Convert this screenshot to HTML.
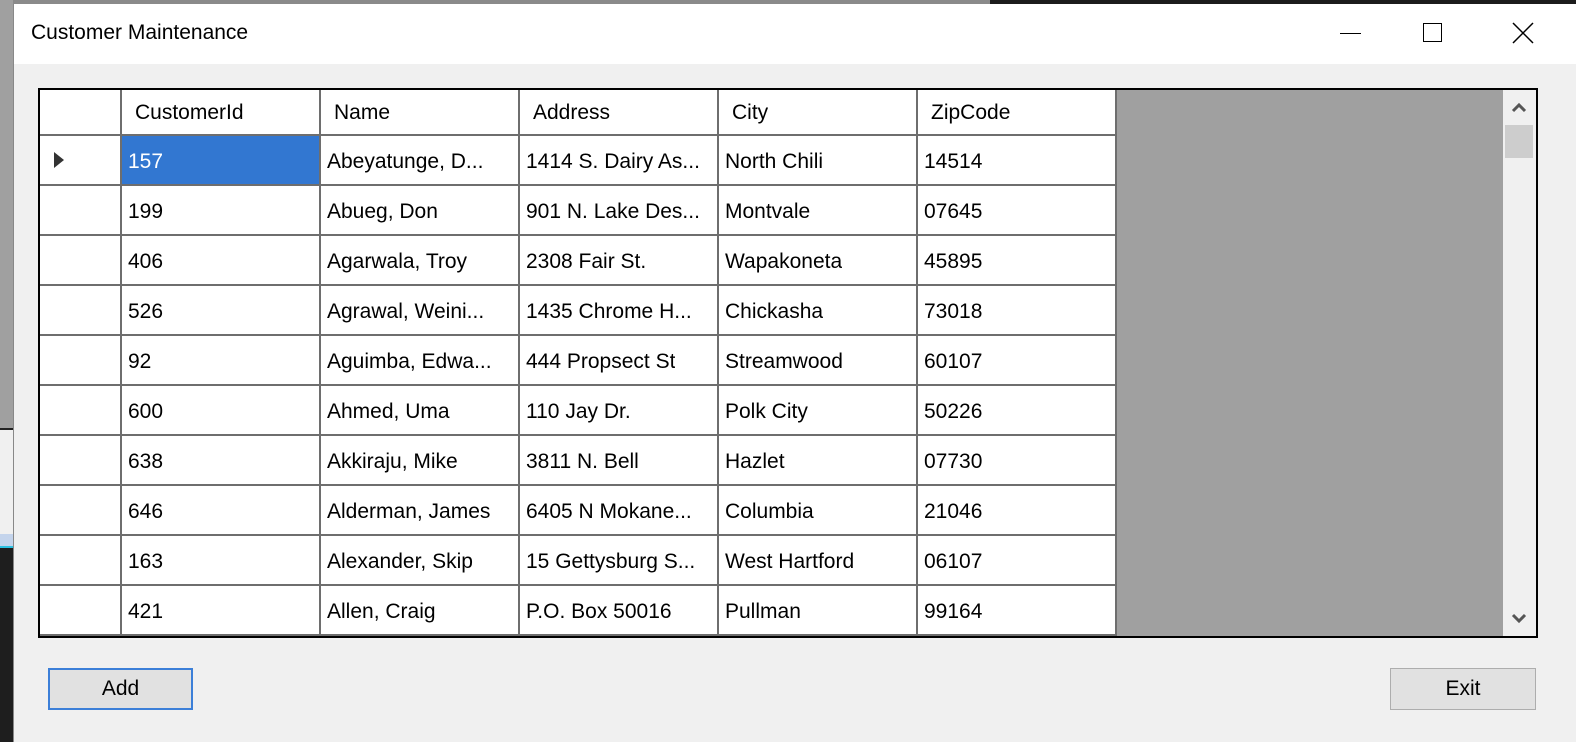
<!DOCTYPE html>
<html><head><style>
*{margin:0;padding:0;box-sizing:border-box}
body{width:1576px;height:742px;position:relative;overflow:hidden;background:#f0f0f0;font-family:"Segoe UI","Liberation Sans",sans-serif;color:#000}
.a{position:absolute}
.cell{position:absolute;font-size:21px;line-height:49px;padding-left:7px;white-space:nowrap;overflow:hidden}
</style></head><body>
<div class="a" style="left:0;top:0;width:1576px;height:4px;background:#8a8a8a"></div>
<div class="a" style="left:990px;top:0;width:586px;height:4px;background:#1c1c1c"></div>
<div class="a" style="left:0;top:0;width:13px;height:428px;background:#a0a0a0"></div>
<div class="a" style="left:0;top:428px;width:13px;height:2px;background:#222"></div>
<div class="a" style="left:0;top:430px;width:13px;height:104px;background:#f0f0f0"></div>
<div class="a" style="left:0;top:534px;width:13px;height:12px;background:#c4d4ec"></div>
<div class="a" style="left:0;top:546px;width:13px;height:2px;background:#2cc0e0"></div>
<div class="a" style="left:0;top:548px;width:13px;height:194px;background:#1e1e1e"></div>
<div class="a" style="left:13px;top:4px;width:1px;height:738px;background:#888"></div>
<div class="a" style="left:14px;top:4px;width:1562px;height:60px;background:#fff"></div>
<div class="a" style="left:31px;top:18px;font-size:21px;line-height:30px">Customer Maintenance</div>
<div class="a" style="left:1340px;top:33px;width:21px;height:1px;background:#000"></div>
<div class="a" style="left:1423px;top:23px;width:19px;height:19px;border:1.5px solid #000"></div>
<svg class="a" style="left:1512px;top:22px" width="22" height="22"><path d="M1 1L21 21M21 1L1 21" stroke="#000" stroke-width="1.5"/></svg>
<div class="a" style="left:38px;top:88px;width:1500px;height:550px;border:2px solid #000;background:#a0a0a0;overflow:hidden">
<div class="a" style="left:0;top:0;width:1076px;height:546px;background:#fff"></div>
<div class="a" style="left:1463px;top:0;width:33px;height:546px;background:#f0f0f0"></div>
<div class="a" style="left:1465px;top:35px;width:28px;height:33px;background:#cdcdcd"></div>
<svg class="a" style="left:1471px;top:12px" width="16" height="12"><path d="M2 9L8 3L14 9" stroke="#555" stroke-width="3" fill="none"/></svg>
<svg class="a" style="left:1471px;top:522px" width="16" height="12"><path d="M2 3L8 9L14 3" stroke="#555" stroke-width="3" fill="none"/></svg>
<div id="g"></div>
</div>
<div class="a" style="left:48px;top:668px;width:145px;height:42px;border:2px solid #3c7fd8;background:#e1e1e1;font-size:21px;text-align:center;line-height:37px">Add</div>
<div class="a" style="left:1390px;top:668px;width:146px;height:42px;border:1px solid #adadad;background:#e1e1e1;font-size:21px;text-align:center;line-height:39px">Exit</div>
<script>
var g=document.getElementById('g'),h='';
var xs=[0,80,279,478,677,876,1075];
var hd=['','CustomerId','Name','Address','City','ZipCode'];
var d=[['157','Abeyatunge, D...','1414 S. Dairy As...','North Chili','14514'],['199','Abueg, Don','901 N. Lake Des...','Montvale','07645'],['406','Agarwala, Troy','2308 Fair St.','Wapakoneta','45895'],['526','Agrawal, Weini...','1435 Chrome H...','Chickasha','73018'],['92','Aguimba, Edwa...','444 Propsect St','Streamwood','60107'],['600','Ahmed, Uma','110 Jay Dr.','Polk City','50226'],['638','Akkiraju, Mike','3811 N. Bell','Hazlet','07730'],['646','Alderman, James','6405 N Mokane...','Columbia','21046'],['163','Alexander, Skip','15 Gettysburg S...','West Hartford','06107'],['421','Allen, Craig','P.O. Box 50016','Pullman','99164']];
for(var i=1;i<7;i++)h+='<div class="a" style="left:'+xs[i]+'px;top:0;width:2px;height:546px;background:#6e6e6e"></div>';
for(var r=0;r<11;r++)h+='<div class="a" style="left:0;top:'+(44+r*50)+'px;width:1077px;height:2px;background:#6e6e6e"></div>';
for(var c=1;c<6;c++)h+='<div class="cell" style="left:'+(xs[c]+8)+'px;top:-2px;">'+hd[c]+'</div>';
h+='<div class="a" style="left:82px;top:46px;width:197px;height:48px;background:#3277d1"></div>';
h+='<svg class="a" style="left:14px;top:62px" width="12" height="16"><path d="M0 0L10 8L0 16Z" fill="#333"/></svg>';
for(var r=0;r<10;r++)for(var c=0;c<5;c++)h+='<div class="cell" style="left:'+(xs[c+1]+1)+'px;top:'+(47+r*50)+'px;'+(r==0&&c==0?'color:#fff':'')+'">'+d[r][c]+'</div>';
g.innerHTML=h;
</script>
</body></html>
